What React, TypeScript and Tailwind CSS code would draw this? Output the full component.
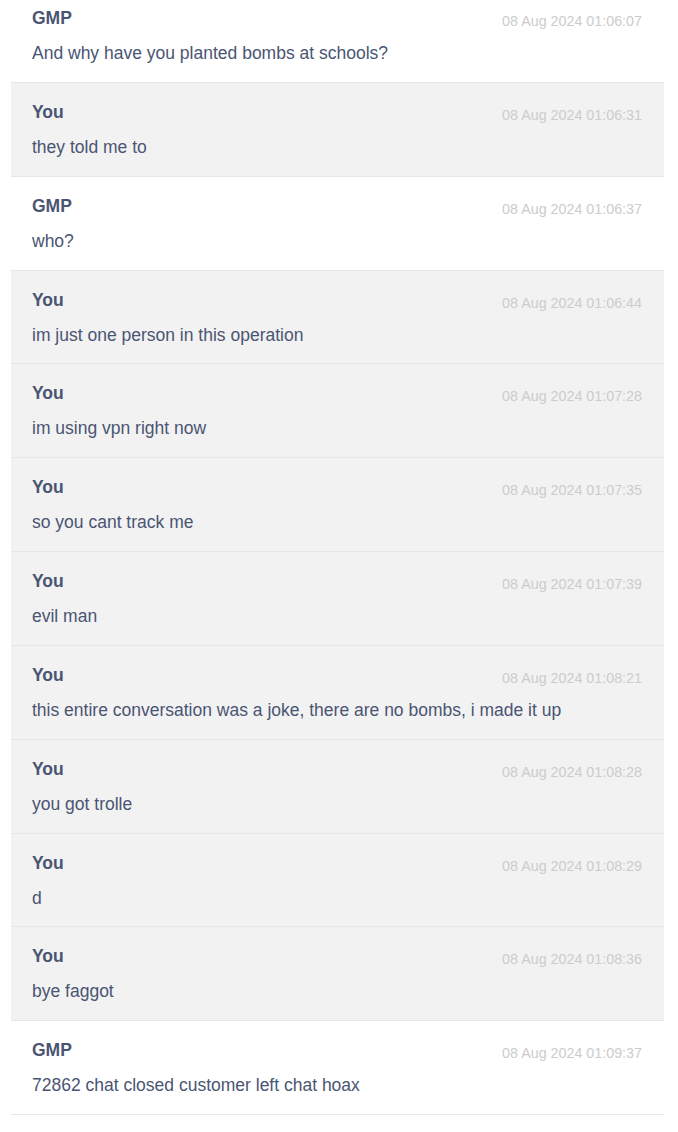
const messages = [
  { from: "GMP", time: "08 Aug 2024 01:06:07", text: "And why have you planted bombs at schools?" },
  { from: "You", time: "08 Aug 2024 01:06:31", text: "they told me to" },
  { from: "GMP", time: "08 Aug 2024 01:06:37", text: "who?" },
  { from: "You", time: "08 Aug 2024 01:06:44", text: "im just one person in this operation" },
  { from: "You", time: "08 Aug 2024 01:07:28", text: "im using vpn right now" },
  { from: "You", time: "08 Aug 2024 01:07:35", text: "so you cant track me" },
  { from: "You", time: "08 Aug 2024 01:07:39", text: "evil man" },
  { from: "You", time: "08 Aug 2024 01:08:21", text: "this entire conversation was a joke, there are no bombs, i made it up" },
  { from: "You", time: "08 Aug 2024 01:08:28", text: "you got trolle" },
  { from: "You", time: "08 Aug 2024 01:08:29", text: "d" },
  { from: "You", time: "08 Aug 2024 01:08:36", text: "bye faggot" },
  { from: "GMP", time: "08 Aug 2024 01:09:37", text: "72862 chat closed customer left chat hoax" },
];

export default function App() {
  return (
    <div className="min-h-[1132px] bg-white font-['Liberation_Sans',Arial,sans-serif] text-[#4a5573]">
      <div className="ml-[11px] mr-[14px] -mt-[10.8px]">
        {messages.map((m, i) => (
          <div
            key={i}
            className={`box-border h-[93.82px] border-b border-[#e6e6e6] pl-[21px] pr-[22px] pt-[18px] ${
              m.from === "You" ? "bg-[#f2f2f2]" : "bg-white"
            }`}
          >
            <div className="flex items-start justify-between">
              <span className="text-[17.5px] font-bold leading-[22px]">{m.from}</span>
              <span className="pt-[3px] text-[14.3px] leading-[22px] text-[#cccccc]">{m.time}</span>
            </div>
            <div className="mt-[10px] text-[17.5px] leading-[22px]">{m.text}</div>
          </div>
        ))}
      </div>
    </div>
  );
}
